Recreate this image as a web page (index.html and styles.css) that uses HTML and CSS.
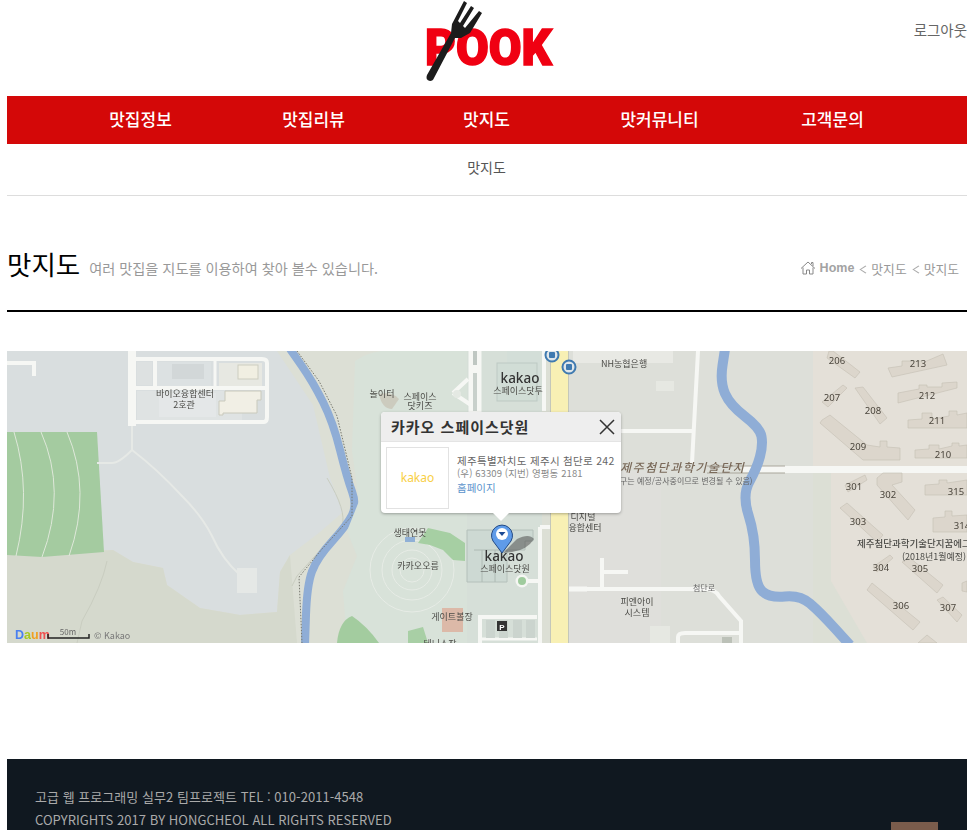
FILE: index.html
```html
<!DOCTYPE html>
<html lang="ko">
<head>
<meta charset="utf-8">
<title>맛지도</title>
<link rel="stylesheet" href="styles.css">
</head>
<body>
<div class="page">
  <header class="top">
    <svg class="logo" width="134" height="84" viewBox="0 0 134 84">
      <text class="logo-word" x="5" y="65" textLength="127" lengthAdjust="spacingAndGlyphs">POOK</text>
      <path class="fork" d="M10 81 Q5 80 7 75 L31 33 L32 24 L44 1 L47 3 L38 21 L40 23 L51 6 L54 8 L43 26 L45 28 L59 11 L62 13 L50 33 L41 38 L35 38 L14 78 Q13 81 10 81Z"/>
    </svg>
    <a class="logout">로그아웃</a>
  </header>
  <nav class="gnb">
    <a>맛집정보</a><a>맛집리뷰</a><a>맛지도</a><a>맛커뮤니티</a><a>고객문의</a>
  </nav>
  <div class="subnav"><a>맛지도</a></div>
  <section class="title-row">
    <div class="title-text"><h1>맛지도</h1><p>여러 맛집을 지도를 이용하여 찾아 볼수 있습니다.</p></div>
    <div class="crumbs">
      <svg class="home" width="16" height="14" viewBox="0 0 16 14"><path d="M1 7.5 L8 1 L15 7.5 M3 6.5 V13 H6.5 V9 H9.5 V13 H13 V6.5 M11.5 3 V1.5 H13 V5"/></svg>
      <b>Home</b><i class="chev"></i><span>맛지도</span><i class="chev"></i><span>맛지도</span>
    </div>
  </section>
  <section class="map">
    <svg class="map-art" width="960" height="292" viewBox="0 0 960 292">
      <rect width="960" height="292" fill="#dcdfd5"/>
      <!-- west grey site -->
      <path fill="#d9dedf" d="M0 0 L270 0 L306 54 L323 127 L336 161 L313 181 L283 204 L273 221 L270 261 L233 264 L193 257 L160 234 L156 217 L126 211 L106 199 L0 204Z"/>
      <path fill="#d5d9cd" d="M0 204 L106 199 L126 211 L156 217 L160 234 L193 257 L233 264 L270 261 L273 221 L283 204 L290 292 L0 292Z"/>
      <path fill="#a4cba0" d="M0 81 L90 81 L97 201 L35 206 L0 204Z"/>
      <g class="pale"><path d="M7 81 Q25 140 9 205"/><path d="M34 81 Q60 140 35 206"/><path d="M60 81 Q85 140 62 205"/></g>
      <g class="path-line"><path d="M90 112 H105 Q112 112 125 99 V75"/><path d="M125 99 Q150 118 175 145 Q195 165 205 185 Q215 208 233 224"/></g>
      <rect x="230" y="217" width="20" height="25" fill="#e5e8e6"/>
      <path fill="none" stroke="#c9cdc0" d="M320 127 Q340 160 335 175 L290 225 L285 235 M100 210 Q95 235 75 270 L70 292"/>
      <!-- bio center -->
      <g class="road"><path d="M125 0 V75" stroke-width="8"/><path d="M127 71 H257 Q260 71 260 66 V12 Q260 8 255 8 H127" stroke-width="4"/><path d="M127 37 H260" stroke-width="4"/><path d="M148 8 V37" stroke-width="4"/><path d="M0 12 H27 V25" stroke-width="4"/><path d="M208 8 V37" stroke-width="3"/></g>
      <rect x="130" y="11" width="15" height="23" fill="#dde1e1"/>
      <rect x="150" y="11" width="54" height="24" fill="#dce1e2"/><rect x="165" y="13" width="32" height="15" fill="#d2d7d8"/><rect x="130" y="40" width="105" height="29" fill="#dfe3e3"/>
      <rect x="152" y="42" width="57" height="24" fill="#e4e7e8"/>
      <rect x="212" y="12" width="43" height="23" fill="#e7e8e2"/><rect x="231" y="14" width="20" height="14" fill="#f1efe2" stroke="#cdcdc0"/>
      <path fill="#f1efe5" stroke="#c9c9bc" d="M216 62 H250 V49 H254 V40 H218 V50 H212 V64 H216Z"/>
      <text class="lbl" x="178" y="46" text-anchor="middle">바이오융합센터</text><text class="lbl" x="177" y="57" text-anchor="middle">2호관</text>
      <!-- river west -->
      <path class="river" stroke-width="8" d="M283 -2 L294.500 14.500 Q306 31 316 51 Q326 71 333 99 Q340 127 345 140.500 Q350 154 345 164 Q340 174 325 190.500 Q310 207 305 220.500 Q300 234 299 264 L298 294"/>
      <path fill="none" stroke="#77786f" stroke-dasharray="1.500 1.500" d="M290 0 L312 30 L330 65 L345 127 L345 165 L315 198 L292 226 L295 292"/>
      <!-- central park -->
      <path fill="#d8e2d9" d="M348 10 Q368 -4 400 0 L460 0 L460 292 L340 292 L336 240 L350 205 L340 180 L352 150 L345 100 Z"/>
      <path fill="#a3cc9f" d="M330 292 Q332 270 345 265 Q360 275 372 292Z"/>
      <g fill="none" stroke="#e7ece6"><circle cx="405" cy="219" r="12"/><circle cx="405" cy="219" r="20"/><circle cx="405" cy="219" r="30"/><circle cx="405" cy="219" r="42"/></g>
      <path fill="#a6cfa3" d="M411 192 L421 177 L443 182 L458 192 L458 210 L446 209 L436 199 L423 194Z"/>
      <rect x="398" y="186" width="10" height="5" fill="#8fb0d6"/>
      <path fill="#d6dfd8" d="M460 0 H535 V292 H460Z"/>
      <path fill="#cdd9d3" stroke="#b4c0ba" d="M460 179 H526 V190 H518 V199 H500 V231 H460Z"/>
      <path fill="none" stroke="#aebab4" d="M475 199 V231 M488 199 V231 M467 199 H500"/>
      <rect x="435" y="257" width="21" height="24" fill="#dcb9a8"/>
      <path fill="#a8cfa5" d="M401 280 L416 276 L421 292 L401 292Z"/>
      <g class="road"><path d="M533 176 V292 M533 176 H544" stroke-width="4"/><path d="M533 230 H516" stroke-width="4"/><path d="M471 266 H530 M473 266 V292" stroke-width="4"/><path d="M472 288 H530" stroke-width="3"/></g>
      <circle cx="515" cy="230" r="6.500" fill="#f5f6f3"/><circle cx="515" cy="230" r="4" fill="#9fcb9d"/>
      <g fill="#cbd4ce"><rect x="479" y="269" width="9" height="18"/><rect x="492" y="269" width="9" height="18"/><rect x="506" y="269" width="9" height="18"/><rect x="519" y="269" width="9" height="18"/></g>
      <rect x="490" y="270" width="10" height="10" fill="#333"/><text class="plabel" x="495" y="278.500" text-anchor="middle">P</text>
      <!-- north center roads -->
      <rect x="500" y="0" width="33" height="50" fill="#d3ded8"/>
      <rect x="490" y="12" width="40" height="38" fill="#d1ddd6" stroke="#bdc9c3"/>
      <g class="road"><path d="M468 0 V62" stroke-width="13"/><path d="M446 42 L461 28 M446 42 L470 58" stroke-width="4"/><path d="M537 0 V60" stroke-width="4"/></g>
      <rect x="466" y="0" width="4" height="14" fill="#bfc7c2"/><rect x="466" y="22" width="4" height="38" fill="#c8d0cb"/>
      <circle cx="450" cy="43" r="4" fill="#e4e9e3"/>
      <path fill="#c3b8a8" opacity=".55" d="M372 43 Q385 40 392 48 L385 58 Q375 58 372 43Z"/>
      <!-- east side ground + roads -->
      <path fill="#dddfd9" d="M561 0 H806 V292 H561Z"/><rect x="561" y="120" width="93" height="172" fill="#dfdfdb"/><rect x="566" y="0" width="100" height="12" fill="#e8e9e4"/>
      <path fill="#e4e0d8" d="M806 0 H960 V115 H806Z M824 122 H960 V292 H860 L824 230Z"/>
      <rect x="649" y="30" width="18" height="10" fill="#e6e8e2"/>
      <g class="road"><path d="M691 0 L685 112 M600 80 H685" stroke-width="4"/><path d="M736 118.500 H960" stroke-width="7"/><path d="M561 238 H697 Q708 238 712 245 L734 270 V292" stroke-width="4"/><path d="M595 207 V238 M595 221 H621" stroke-width="4"/><path d="M671 292 V286 Q671 282 678 282 H736" stroke-width="4"/></g>
      <path fill="none" stroke="#a9a69b" d="M700 115 H778 M700 122 H778"/>
      <rect x="715" y="286" width="10" height="6" fill="#bcc1b8"/>
      <rect x="643" y="275" width="20" height="17" fill="#e6e8e2"/>
      <!-- river east -->
      <path class="river" stroke-width="10" d="M718 -2 L715.500 14.500 Q713 31 718 42.500 Q723 54 738 65.500 Q753 77 754.500 85.500 Q756 94 753 105.500 Q750 117 742.500 130.500 Q735 144 741.500 164 Q748 184 748 209 Q748 234 755.500 240.500 Q763 247 778 245.500 Q793 244 803 252.500 Q813 261 828 277.500 L843 294"/>
      <!-- yellow road -->
      <rect x="543" y="0" width="19" height="292" fill="#c4c7ba"/><rect x="544" y="0" width="17" height="292" fill="#f8f0b4"/>
      <g class="road"><path d="M562 238 H580" stroke-width="5"/></g>
      <!-- apartments -->
      <g class="apt">
        <path d="M826 0 L853 21 L848 27 L820 7 L822 0Z"/>
        <path d="M881 17 L895 15 V10 H915 V12 L936 3 L940 14 L885 26Z"/>
        <path d="M815 51 L836 34 L840 37 L821 56Z"/>
        <path d="M848 37 L856 36 L880 67 L873 73Z"/>
        <path d="M891 42 L912 38 V34 H920 V36 H935 V32 L950 31 V37 L891 52Z"/>
        <path d="M901 69 L915 68 V62 H925 V68 L942 65 V60 H950 V64 L960 62 V77 H901Z"/>
        <path d="M815 69 L823 64 L860 94 L873 96 V90 H880 V96 L893 97 V109 H856 L813 72Z"/>
        <path d="M908 99 L922 98 V94 H932 V98 L945 95 V92 H952 V95 L960 94 V107 H908Z"/>
        <path d="M838 134 L858 124 L860 129 L841 141Z"/>
        <path d="M870 127 L876 122 H895 V131 L885 134 L908 159 L901 169 L870 134Z"/>
        <path d="M918 134 L932 133 V129 H940 V132 L960 129 V144 H918Z"/>
        <path d="M833 157 L840 152 L876 184 L870 191Z"/>
        <path d="M926 167 L938 166 V160 H945 V165 L960 164 V181 H926Z"/>
        <path d="M866 216 L883 204 L886 207 L870 221Z"/>
        <path d="M895 211 L903 207 L936 234 L930 242Z"/>
        <path d="M860 239 L865 232 L913 271 L906 279Z"/>
        <path d="M930 249 L936 246 L955 264 L950 271Z"/>
        <path d="M911 292 L920 284 L930 292Z"/>
        <path d="M955 232 L960 230 V241 L955 240Z"/>
      </g>
      <!-- labels -->
      <g class="num">
        <text x="830" y="13">206</text><text x="911" y="16">213</text><text x="825" y="50">207</text><text x="920" y="48">212</text><text x="866" y="63">208</text><text x="930" y="73">211</text><text x="851" y="99">209</text><text x="936" y="107">210</text><text x="847" y="139">301</text><text x="881" y="147">302</text><text x="949" y="144">315</text><text x="851" y="174">303</text><text x="955" y="178">314</text><text x="874" y="220">304</text><text x="913" y="221">305</text><text x="894" y="258">306</text><text x="941" y="260">307</text>
      </g>
      <text class="lbl" x="594" y="16">NH농협은행</text>
      <text class="lbl" x="375" y="46" text-anchor="middle">놀이터</text><text class="lbl" x="413" y="49" text-anchor="middle">스페이스</text><text class="lbl" x="413" y="58" text-anchor="middle">닷키즈</text>
      <text class="kakao" x="513" y="32" text-anchor="middle">kakao</text><text class="lbl" x="511" y="43" text-anchor="middle">스페이스닷투</text>
      <g class="bus"><circle cx="545" cy="4" r="6.500"/><circle cx="562" cy="16" r="6.500"/><rect x="542" y="1" width="6" height="6" rx="1"/><rect x="559" y="13" width="6" height="6" rx="1"/></g>
      <text class="zone" x="613" y="121">제주첨단과학기술단지</text>
      <text class="lbl small" x="613" y="133">구는 예정/공사중이므로 변경될 수 있음)</text>
      <text class="lbl" x="576" y="169" text-anchor="middle">디지털</text><text class="lbl" x="578" y="180" text-anchor="middle">융합센터</text>
      <text class="lbl" x="403" y="185" text-anchor="middle">생태연못</text><text class="lbl" x="411" y="218" text-anchor="middle">카카오오름</text>
      <text class="lbl" x="445" y="269" text-anchor="middle">게이트볼장</text>
      <!-- pin -->
      <path fill="#444" opacity=".5" d="M496 202 L510 188 Q522 182 527 188 Q520 199 505 201Z"/>
      <text class="kakao" x="497" y="210" text-anchor="middle">kakao</text><text class="lbl" x="498" y="221" text-anchor="middle">스페이스닷원</text>
      <path fill="#5f9be8" stroke="#234a85" d="M495 202 L486 190 A10.500 10.500 0 1 1 504 190 Z"/>
      <circle cx="495" cy="183" r="6" fill="#fff"/><path d="M491.500 181 H498.500 L495 185Z" fill="#1d4a94"/>
      <text class="lbl" x="630" y="254" text-anchor="middle">피엔아이</text><text class="lbl" x="630" y="265" text-anchor="middle">시스템</text>
      <text class="lbl small road-name" x="686" y="240">첨단로</text>
      <text class="lbl bold" x="850" y="196">제주첨단과학기술단지꿈에그린</text><text class="lbl" x="927" y="209" text-anchor="middle">(2018년1월예정)</text>
      <text class="lbl" x="433" y="296" text-anchor="middle">테니스장</text>
      <!-- logo/scale -->
      <text class="daum" x="8" y="288"><tspan fill="#4a80f0">D</tspan><tspan fill="#a8c820">a</tspan><tspan fill="#f0a020">u</tspan><tspan fill="#f05050">m</tspan></text>
      <path fill="none" stroke="#222" stroke-width="1.500" d="M41 283 V287 H82 V283"/>
      <text class="lbl small" x="61" y="284" text-anchor="middle">50m</text>
      <text class="lbl copy" x="87" y="288">© Kakao</text>
    </svg>
    <div class="info">
      <div class="info-head"><strong>카카오 스페이스닷원</strong>
        <svg class="close" width="16" height="16" viewBox="0 0 16 16"><path d="M1 1 L15 15 M15 1 L1 15"/></svg>
      </div>
      <div class="info-body">
        <div class="thumb">kakao</div>
        <div class="addr">
          <p class="a1">제주특별자치도 제주시 첨단로 242</p>
          <p class="a2">(우) 63309 (지번) 영평동 2181</p>
          <a>홈페이지</a>
        </div>
      </div>
    </div>
  </section>
  <footer class="foot">
    <p>고급 웹 프로그래밍 실무2 팀프로젝트 TEL : 010-2011-4548</p>
    <p>COPYRIGHTS 2017 BY HONGCHEOL ALL RIGHTS RESERVED</p>
    <span class="totop"></span>
  </footer>
</div>
</body>
</html>
```
FILE: styles.css
```css
* { box-sizing: border-box; }
html, body { margin: 0; height: 830px; overflow: hidden; background: #fff; }
body { font-family: "Noto Sans CJK KR", "Noto Sans", sans-serif; color: #555; }
p, h1 { margin: 0; }
.page { width: 960px; margin-left: 7px; }

.top { height: 96px; position: relative; display: flex; justify-content: center; }
.logo-word { font: 900 50px Roboto, "Liberation Sans", sans-serif; fill: #f00012; stroke: #f00012; stroke-width: 1.500px; }
.fork { fill: #1c1c1c; }
.logout { position: absolute; right: 0; top: 20px; font-size: 14.500px; line-height: 20px; color: #666; }

.gnb { height: 48px; background: #d40808; display: flex; padding-left: 47px; }
.gnb a { width: 173px; text-align: center; font-size: 17px; font-weight: 500; line-height: 45px; color: #fff; }

.subnav { height: 52px; border-bottom: 1px solid #ddd; text-align: center; font-size: 14px; line-height: 47px; padding-right: 1px; color: #555; }

.title-row { height: 116px; border-bottom: 2px solid #000; display: flex; justify-content: space-between; align-items: flex-start; padding-top: 47px; }
.title-text { display: flex; align-items: flex-start; gap: 10px; }
h1 { font-size: 26.500px; font-weight: 400; line-height: 42px; color: #000; }
.title-text p { font-size: 14.200px; line-height: 20px; margin-top: 15px; color: #999; margin-left: -1px; }
.crumbs { display: flex; align-items: center; font-size: 12.800px; color: #999; height: 26px; margin-top: 12px; padding-right: 8px; }
.crumbs b { font: bold 12.500px "Liberation Sans", sans-serif; margin-left: 4px; color: #a3a3a3; }
.home { fill: none; stroke: #888; stroke-width: 1px; }
.chev { width: 7px; height: 7px; border-left: 1px solid #aaa; border-bottom: 1px solid #aaa; transform: rotate(45deg) skew(-12deg, -12deg); margin: 3px 2px 0 8px; }

.map { position: relative; height: 292px; margin-top: 39px; overflow: hidden; }
.map-art { display: block; filter: blur(.35px); }
.pale path { fill: none; stroke: #dfe8da; stroke-width: 1px; }
.path-line path { fill: none; stroke: #e6e9e6; stroke-width: 2px; }
.road path { fill: none; stroke: #f6f7f4; }
.river { fill: none; stroke: #8fadd6; stroke-linejoin: round; }
.apt path { fill: #dcd6cc; stroke: #c4bfb3; stroke-width: .6px; }
.num text { font: 9.500px "Noto Sans", sans-serif; fill: #4a453c; text-anchor: middle; }
.lbl { font: 9px "Noto Sans CJK KR", sans-serif; fill: #4b4b47; }
.lbl.small { font-size: 8px; fill: #666; }
.lbl.bold { font-size: 9.500px; font-weight: 500; }
.lbl.copy { font-size: 9px; fill: #777; }
.kakao { font: 500 13.500px "Noto Sans", sans-serif; fill: #333; }
.plabel { font: bold 8px "Liberation Sans", sans-serif; fill: #fff; }
.zone { font: italic 500 12px "Noto Sans CJK KR", sans-serif; fill: #7a6a5a; letter-spacing: 1.500px; }
.bus circle { fill: #dfe6ea; stroke: #3f7ab0; stroke-width: 2px; }
.bus rect { fill: #3f7ab0; }
.daum { font: bold 12.500px "Liberation Sans", sans-serif; }

.info { position: absolute; left: 374px; top: 61px; width: 240px; height: 101px; background: #fff; border-radius: 4px; box-shadow: 0 1px 3px rgba(0,0,0,.3); }
.info::after { content: ""; position: absolute; left: 111px; top: 100px; border: 9px solid transparent; border-top-color: #fff; border-bottom: 0; }
.info-head { height: 30px; background: #eee; border-bottom: 1px solid #e4e4e4; border-radius: 4px 4px 0 0; display: flex; justify-content: space-between; align-items: center; padding: 0 6px 0 10px; }
.info-head strong { font-size: 15px; font-weight: 700; color: #333; letter-spacing: 1px; }
.close { fill: none; stroke: #333; stroke-width: 1.500px; }
.info-body { display: flex; padding: 5px; gap: 8px; }
.thumb { width: 63px; height: 62px; border: 1px solid #e2e2e2; color: #f8cf45; font: 12px/60px "Noto Sans", sans-serif; text-align: center; }
.addr { font-size: 10.500px; line-height: 12px; padding-top: 8px; white-space: nowrap; }
.a1 { color: #666; letter-spacing: .3px; }
.a2 { color: #888; font-size: 9.500px; letter-spacing: .1px; }
.addr a { display: block; color: #5b93cc; margin-top: 3px; }

.foot { position: relative; height: 90px; margin-top: 116px; background: #101820; padding-top: 27px; color: #aaa; font-size: 13px; line-height: 22.500px; padding-left: 28px; letter-spacing: .04px; }
.totop { position: absolute; left: 884px; top: 63px; width: 47px; height: 40px; background: #7a5c4c; }
```
